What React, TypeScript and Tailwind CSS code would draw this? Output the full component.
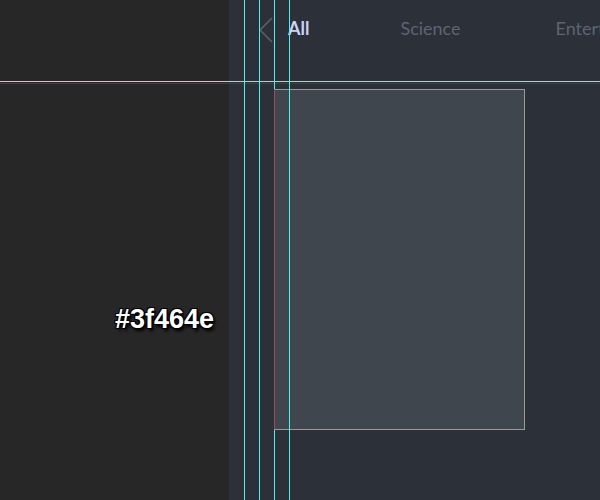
export default function App() {
  return (
    <div className="relative flex h-[500px] w-[600px] overflow-hidden bg-[#2c3038]">
      <aside className="flex w-[229px] shrink-0 flex-col bg-[#272727] pl-[115px] pt-[303px]">
        <span
          className="text-[27px] font-bold leading-[32px] text-white"
          style={{
            fontFamily: '"Liberation Sans", Arial, sans-serif',
            textShadow:
              "-1px -1px 0 #000, 1px -1px 0 #000, -1px 1px 0 #000, 1px 1px 0 #000, 2px 3px 3px #000",
          }}
        >
          #3f464e
        </span>
      </aside>

      <main className="flex flex-1 flex-col">
        <header
          className="flex h-[81px] items-start pt-[15px] whitespace-nowrap text-[18px]"
          style={{ fontFamily: "Lato, sans-serif" }}
        >
          <svg width="16" height="26" viewBox="0 0 16 26" className="ml-[29px] mt-[2px] shrink-0">
            <path d="M14 1 L2 13 L14 25" fill="none" stroke="#5b6069" strokeWidth="1.6" />
          </svg>
          <span className="ml-[14px] font-bold text-[#c9d3f5]">All</span>
          <span className="ml-[91px] text-[#5d6472]">Science</span>
          <span className="ml-[95px] text-[#5d6472]">Entertainment</span>
        </header>
        <div className="ml-[45px] mt-[8px] h-[341px] w-[251px] border border-[#9a9a9a] border-l-[#a04a5e] bg-[#3f464e]" />
      </main>

      {/* guide lines */}
      <div className="pointer-events-none absolute left-0 top-[81px] h-px w-full bg-[#5ff6f6]" />
      <div className="pointer-events-none absolute left-0 top-[83px] h-px w-full bg-[#3c3d5a]" />
      <div className="pointer-events-none absolute left-[244px] top-0 h-full w-px bg-[#4ff0f0]" />
      <div className="pointer-events-none absolute left-[259px] top-0 h-full w-px bg-[#4ff0f0]" />
      <div className="pointer-events-none absolute left-[274px] top-0 h-[89px] w-px bg-[#4ff0f0]" />
      <div className="pointer-events-none absolute left-[274px] top-[430px] h-[70px] w-px bg-[#4ff0f0]" />
      <div className="pointer-events-none absolute left-[289px] top-0 h-full w-px bg-[#4ff0f0]" />
    </div>
  );
}
